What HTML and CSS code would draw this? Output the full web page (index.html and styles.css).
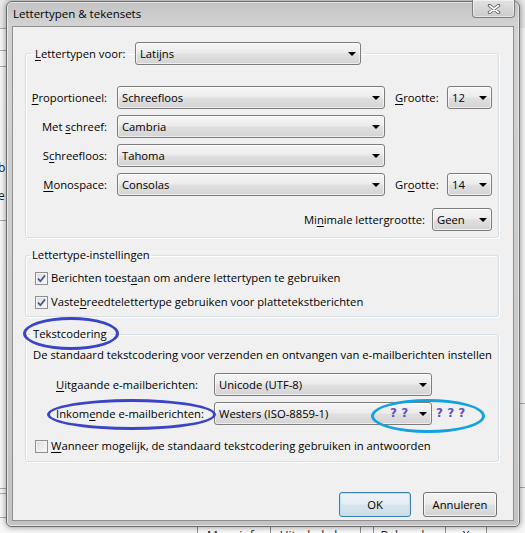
FILE: index.html
```html
<!DOCTYPE html>
<html lang="nl">
<head>
<meta charset="utf-8">
<title>Lettertypen &amp; tekensets</title>
<link rel="stylesheet" href="styles.css">
</head>
<body>
<div class="desktop">
  <div class="hl hl-1"></div>
  <div class="hl hl-2"></div>
  <div class="hl hl-3"></div>
  <div class="hl hl-4"></div>
  <div class="hl hl-5"></div>
  <div class="hl hl-6"></div>
  <div class="hl hl-7"></div>
  <div class="hr hr-1"></div>
  <div class="hr hr-2"></div>
  <span class="frag frag-b">b</span>
  <span class="frag frag-e">e</span>
  <div class="notify">
    <span class="nbtn nbtn-info">Meer info</span>
    <span class="nbtn nbtn-off">Uitschakelen</span>
    <span class="nbtn nbtn-split"></span>
    <span class="nbtn nbtn-keep">Behouden</span>
    <span class="nbtn nbtn-x">X</span>
  </div>
</div>

<div class="dialog">
  <div class="titlebar">
    <span class="title">Lettertypen &amp; tekensets</span>
    <span class="close">
      <svg width="14" height="10" viewBox="0 0 14 10">
        <path d="M2.5 1.5 L11.5 8.5 M11.5 1.5 L2.5 8.5" stroke="#5a5a5a" stroke-width="3.4" stroke-linecap="round"/>
        <path d="M2.5 1.5 L11.5 8.5 M11.5 1.5 L2.5 8.5" stroke="#ffffff" stroke-width="1.6" stroke-linecap="round"/>
      </svg>
    </span>
  </div>

  <div class="client">
    <fieldset class="group group-fonts">
      <legend class="legend-combo">
        <span class="legend-inner">
          <span class="lbl-for"><u>L</u>ettertypen voor:</span>
          <span class="combo combo-lang">Latijns</span>
        </span>
      </legend>
      <div class="font-grid">
        <span class="lbl-r"><u>P</u>roportioneel:</span>
        <span class="combo">Schreefloos</span>
        <span class="lbl-size"><u>G</u>rootte:</span>
        <span class="combo">12</span>

        <span class="lbl-r">Met <u>s</u>chreef:</span>
        <span class="combo">Cambria</span>
        <span></span>
        <span></span>

        <span class="lbl-r">S<u>c</u>hreefloos:</span>
        <span class="combo">Tahoma</span>
        <span></span>
        <span></span>

        <span class="lbl-r"><u>M</u>onospace:</span>
        <span class="combo">Consolas</span>
        <span class="lbl-size">Gr<u>o</u>otte:</span>
        <span class="combo">14</span>
      </div>
      <div class="min-row">
        <span>Mi<u>n</u>imale lettergrootte:</span>
        <span class="combo combo-min">Geen</span>
      </div>
    </fieldset>

    <fieldset class="group group-settings">
      <legend class="legend-text">Lettertype-instellingen</legend>
      <div class="check-list">
        <div class="check-row">
          <span class="checkbox">
            <svg width="11" height="11" viewBox="0 0 11 11"><path d="M2 5.6 L4.4 8.2 L9 2.4" fill="none" stroke="#3d5894" stroke-width="1.7"/></svg>
          </span>
          <span>Berichten toest<u>a</u>an om andere lettertypen te gebruiken</span>
        </div>
        <div class="check-row">
          <span class="checkbox">
            <svg width="11" height="11" viewBox="0 0 11 11"><path d="M2 5.6 L4.4 8.2 L9 2.4" fill="none" stroke="#3d5894" stroke-width="1.7"/></svg>
          </span>
          <span>Vaste<u>b</u>reedtelettertype gebruiken voor plattetekstberichten</span>
        </div>
      </div>
    </fieldset>

    <fieldset class="group group-encoding">
      <legend class="legend-enc">Tekstcodering</legend>
      <div class="enc-body">
        <div class="desc">De standaard tekstcodering voor verzenden en ontvangen van e-mailberichten instellen</div>
        <div class="enc-row enc-out">
          <span class="enc-lbl"><u>U</u>itgaande e-mailberichten:</span>
          <span class="combo combo-enc">Unicode (UTF-8)</span>
        </div>
        <div class="enc-row enc-in">
          <span class="enc-lbl">Inkom<u>e</u>nde e-mailberichten:</span>
          <span class="combo combo-enc">Westers (ISO-8859-1)</span>
        </div>
        <div class="check-row check-reply">
          <span class="checkbox"></span>
          <span><u>W</u>anneer mogelijk, de standaard tekstcodering gebruiken in antwoorden</span>
        </div>
      </div>
    </fieldset>

    <div class="buttons">
      <span class="btn btn-default">OK</span>
      <span class="btn">Annuleren</span>
    </div>
  </div>
</div>

<div class="anno">
  <span class="ring ring-legend"></span>
  <span class="ring ring-incoming"></span>
  <span class="ring ring-cyan"></span>
  <span class="qq qq-1">? ?</span>
  <span class="qq qq-2">? ? ?</span>
</div>
</body>
</html>
```

FILE: styles.css
```css
* {
  box-sizing: border-box;
}

html, body {
  margin: 0;
  padding: 0;
}

body {
  width: 525px;
  height: 533px;
  overflow: hidden;
  position: relative;
  background: #f1f1f1;
  font-family: "Open Sans", "Noto Sans", sans-serif;
  font-size: 11.25px;
  line-height: 16px;
  color: #000;
}

u {
  text-decoration: underline;
  text-underline-offset: 2px;
}

/* ---------- desktop behind the dialog ---------- */
.desktop {
  position: absolute;
  inset: 0;
  background: linear-gradient(#e9e9e9 0, #e9e9e9 28px, #f7f7f7 28px);
}

.hl, .hr {
  position: absolute;
  height: 1px;
  background: #a9a9a9;
}

.hl { left: 0; width: 10px; }
.hr { right: 0; width: 10px; }

.hl-1 { top: 28px; }
.hl-2 { top: 50px; }
.hl-3 { top: 66px; }
.hl-4 { top: 220px; }
.hl-5 { top: 488px; }
.hl-6 { top: 493px; }
.hl-7 { top: 517px; }
.hr-1 { top: 403px; }
.hr-2 { top: 487px; }

.frag {
  position: absolute;
  font-size: 12px;
  color: #222;
}

.frag-b { left: -2px; top: 160px; }
.frag-e { left: -2px; top: 188px; }

.notify {
  position: absolute;
  left: 197px;
  top: 522px;
  height: 16px;
  display: flex;
  background: #fafafa;
}

.nbtn {
  height: 16px;
  padding-top: 6px;
  border-left: 1px solid #8c8c8c;
  text-align: center;
  font-size: 12px;
  color: #222;
}

.nbtn-info { width: 73px; }
.nbtn-off { width: 90px; }
.nbtn-split { width: 13px; }
.nbtn-keep { width: 72px; }
.nbtn-x { width: 42px; border-right: 1px solid #8c8c8c; }

/* ---------- dialog window ---------- */
.dialog {
  position: absolute;
  left: 6px;
  top: 1px;
  width: 514px;
  height: 526px;
  border: 1px solid #6c6c6c;
  border-radius: 6px 6px 5px 5px;
  background: linear-gradient(#c3c3c3 0, #d2d2d2 22px, #cacaca 60%, #c3c3c3 100%);
  box-shadow: 0 0 6px rgba(0, 0, 0, 0.45), inset 0 0 0 1px rgba(255, 255, 255, 0.55);
  display: flex;
  flex-direction: column;
}

.titlebar {
  height: 24px;
  display: flex;
  align-items: center;
  justify-content: space-between;
  padding: 0 4px 0 6px;
}

.title {
  font-size: 11.5px;
  color: #000;
}

.close {
  align-self: flex-start;
  margin-top: -2px;
  width: 43px;
  height: 18px;
  border: 1px solid #7d7d7d;
  border-top: none;
  border-radius: 0 0 4px 4px;
  background: linear-gradient(#e2e2e2, #cbcbcb);
  box-shadow: inset 0 0 0 1px rgba(255, 255, 255, 0.5);
  display: flex;
  align-items: center;
  justify-content: center;
}

.client {
  flex: 1;
  margin: 0 5px 5px;
  border: 1px solid #8f8f8f;
  background: #f0f0f0;
  display: flex;
  flex-direction: column;
  padding: 15px 14px 3px 12px;
}

/* ---------- group boxes ---------- */
.group {
  margin: 0;
  padding: 0;
  min-width: 0;
  border: 1px solid #d5dfe5;
  border-radius: 3px;
  box-shadow: inset 1px 1px 0 #ffffff, 1px 1px 0 #ffffff;
}

.group-fonts {
  padding: 21px 6px 6px 0;
}

.group-settings {
  margin-top: 9px;
  padding: 5px 0 4px 0;
}

.group-encoding {
  margin-top: 8px;
  padding: 4px 0 5px 0;
}

.legend-combo {
  margin-left: 5px;
  padding: 0 4px;
}

.legend-inner {
  display: flex;
  align-items: center;
}

.lbl-for {
  width: 100px;
}

.legend-text {
  margin-left: 4px;
  padding: 0 2px;
  line-height: 16px;
}

.legend-enc {
  margin-left: 4px;
  padding: 0 3px;
  line-height: 18px;
}

/* ---------- combo boxes ---------- */
.combo {
  position: relative;
  display: flex;
  align-items: center;
  height: 23px;
  padding: 0 18px 0 4px;
  border: 1px solid #7c7c7c;
  border-radius: 3px;
  background: linear-gradient(#f6f6f6 0%, #ececec 45%, #dfdfdf 55%, #d4d4d4 100%);
  box-shadow: inset 0 0 0 1px rgba(255, 255, 255, 0.6);
  white-space: nowrap;
}

.combo::after {
  content: "";
  position: absolute;
  right: 4px;
  top: 9px;
  border-left: 4px solid transparent;
  border-right: 4px solid transparent;
  border-top: 4px solid #000;
}

.combo-lang {
  width: 226px;
}

.font-grid {
  display: grid;
  grid-template-columns: 81px 268px 42px 45px;
  grid-auto-rows: 23px;
  column-gap: 10px;
  row-gap: 6px;
  align-items: center;
}

.lbl-r {
  text-align: right;
  white-space: nowrap;
}

.lbl-size {
  white-space: nowrap;
}

.min-row {
  margin-top: 12px;
  display: flex;
  justify-content: flex-end;
  align-items: center;
  gap: 7px;
}

.combo-min {
  width: 60px;
}

/* ---------- checkboxes ---------- */
.check-list {
  display: flex;
  flex-direction: column;
  gap: 4px;
  padding-left: 9px;
}

.check-row {
  height: 20px;
  display: flex;
  align-items: center;
  gap: 3px;
  white-space: nowrap;
}

.checkbox {
  width: 13px;
  height: 13px;
  flex: none;
  border: 1px solid #8e8f8f;
  background: linear-gradient(135deg, #dcdcdc, #fbfbfb);
  box-shadow: inset 0 0 0 1px #f4f4f4;
  display: flex;
  align-items: center;
  justify-content: center;
}

/* ---------- encoding section ---------- */
.enc-body {
  padding-left: 7px;
}

.desc {
  white-space: nowrap;
  line-height: 16px;
}

.enc-row {
  display: flex;
  align-items: center;
  padding-left: 23px;
}

.enc-out {
  margin-top: 10px;
}

.enc-in {
  margin-top: 6px;
}

.enc-lbl {
  width: 158px;
  white-space: nowrap;
}

.combo-enc {
  width: 218px;
}

.check-reply {
  margin-top: 11px;
  margin-left: 2px;
}

/* ---------- buttons ---------- */
.buttons {
  margin-top: auto;
  display: flex;
  justify-content: flex-end;
  gap: 12px;
  padding-right: 2px;
}

.btn {
  width: 74px;
  height: 25px;
  display: flex;
  align-items: center;
  justify-content: center;
  border: 1px solid #707070;
  border-radius: 3px;
  background: linear-gradient(#f4f4f4 0%, #ececec 48%, #dfdfdf 52%, #d3d3d3 100%);
  box-shadow: inset 0 0 0 1px rgba(255, 255, 255, 0.7);
}

.btn-default {
  width: 72px;
  border-color: #3c7fb1;
  background: linear-gradient(#eef4f8 0%, #e4edf3 48%, #d7e4ec 52%, #cddde7 100%);
  box-shadow: inset 0 0 0 1px #b9e2f7;
}

/* ---------- annotations drawn over the screenshot ---------- */
.anno {
  position: absolute;
  inset: 0;
  pointer-events: none;
}

.ring {
  position: absolute;
  border-radius: 50%;
  border: 3px solid #3b44c4;
}

.ring-legend {
  left: 23px;
  top: 317px;
  width: 96px;
  height: 33px;
}

.ring-incoming {
  left: 47px;
  top: 399px;
  width: 169px;
  height: 31px;
}

.ring-cyan {
  left: 371px;
  top: 399px;
  width: 114px;
  height: 34px;
  border-color: #14a2df;
}

.qq {
  position: absolute;
  top: 405px;
  font-family: "DejaVu Sans", sans-serif;
  font-weight: bold;
  font-size: 12px;
  line-height: 16px;
  color: #5a52c6;
  white-space: nowrap;
}

.qq-1 { left: 390px; }
.qq-2 { left: 436px; }
```
